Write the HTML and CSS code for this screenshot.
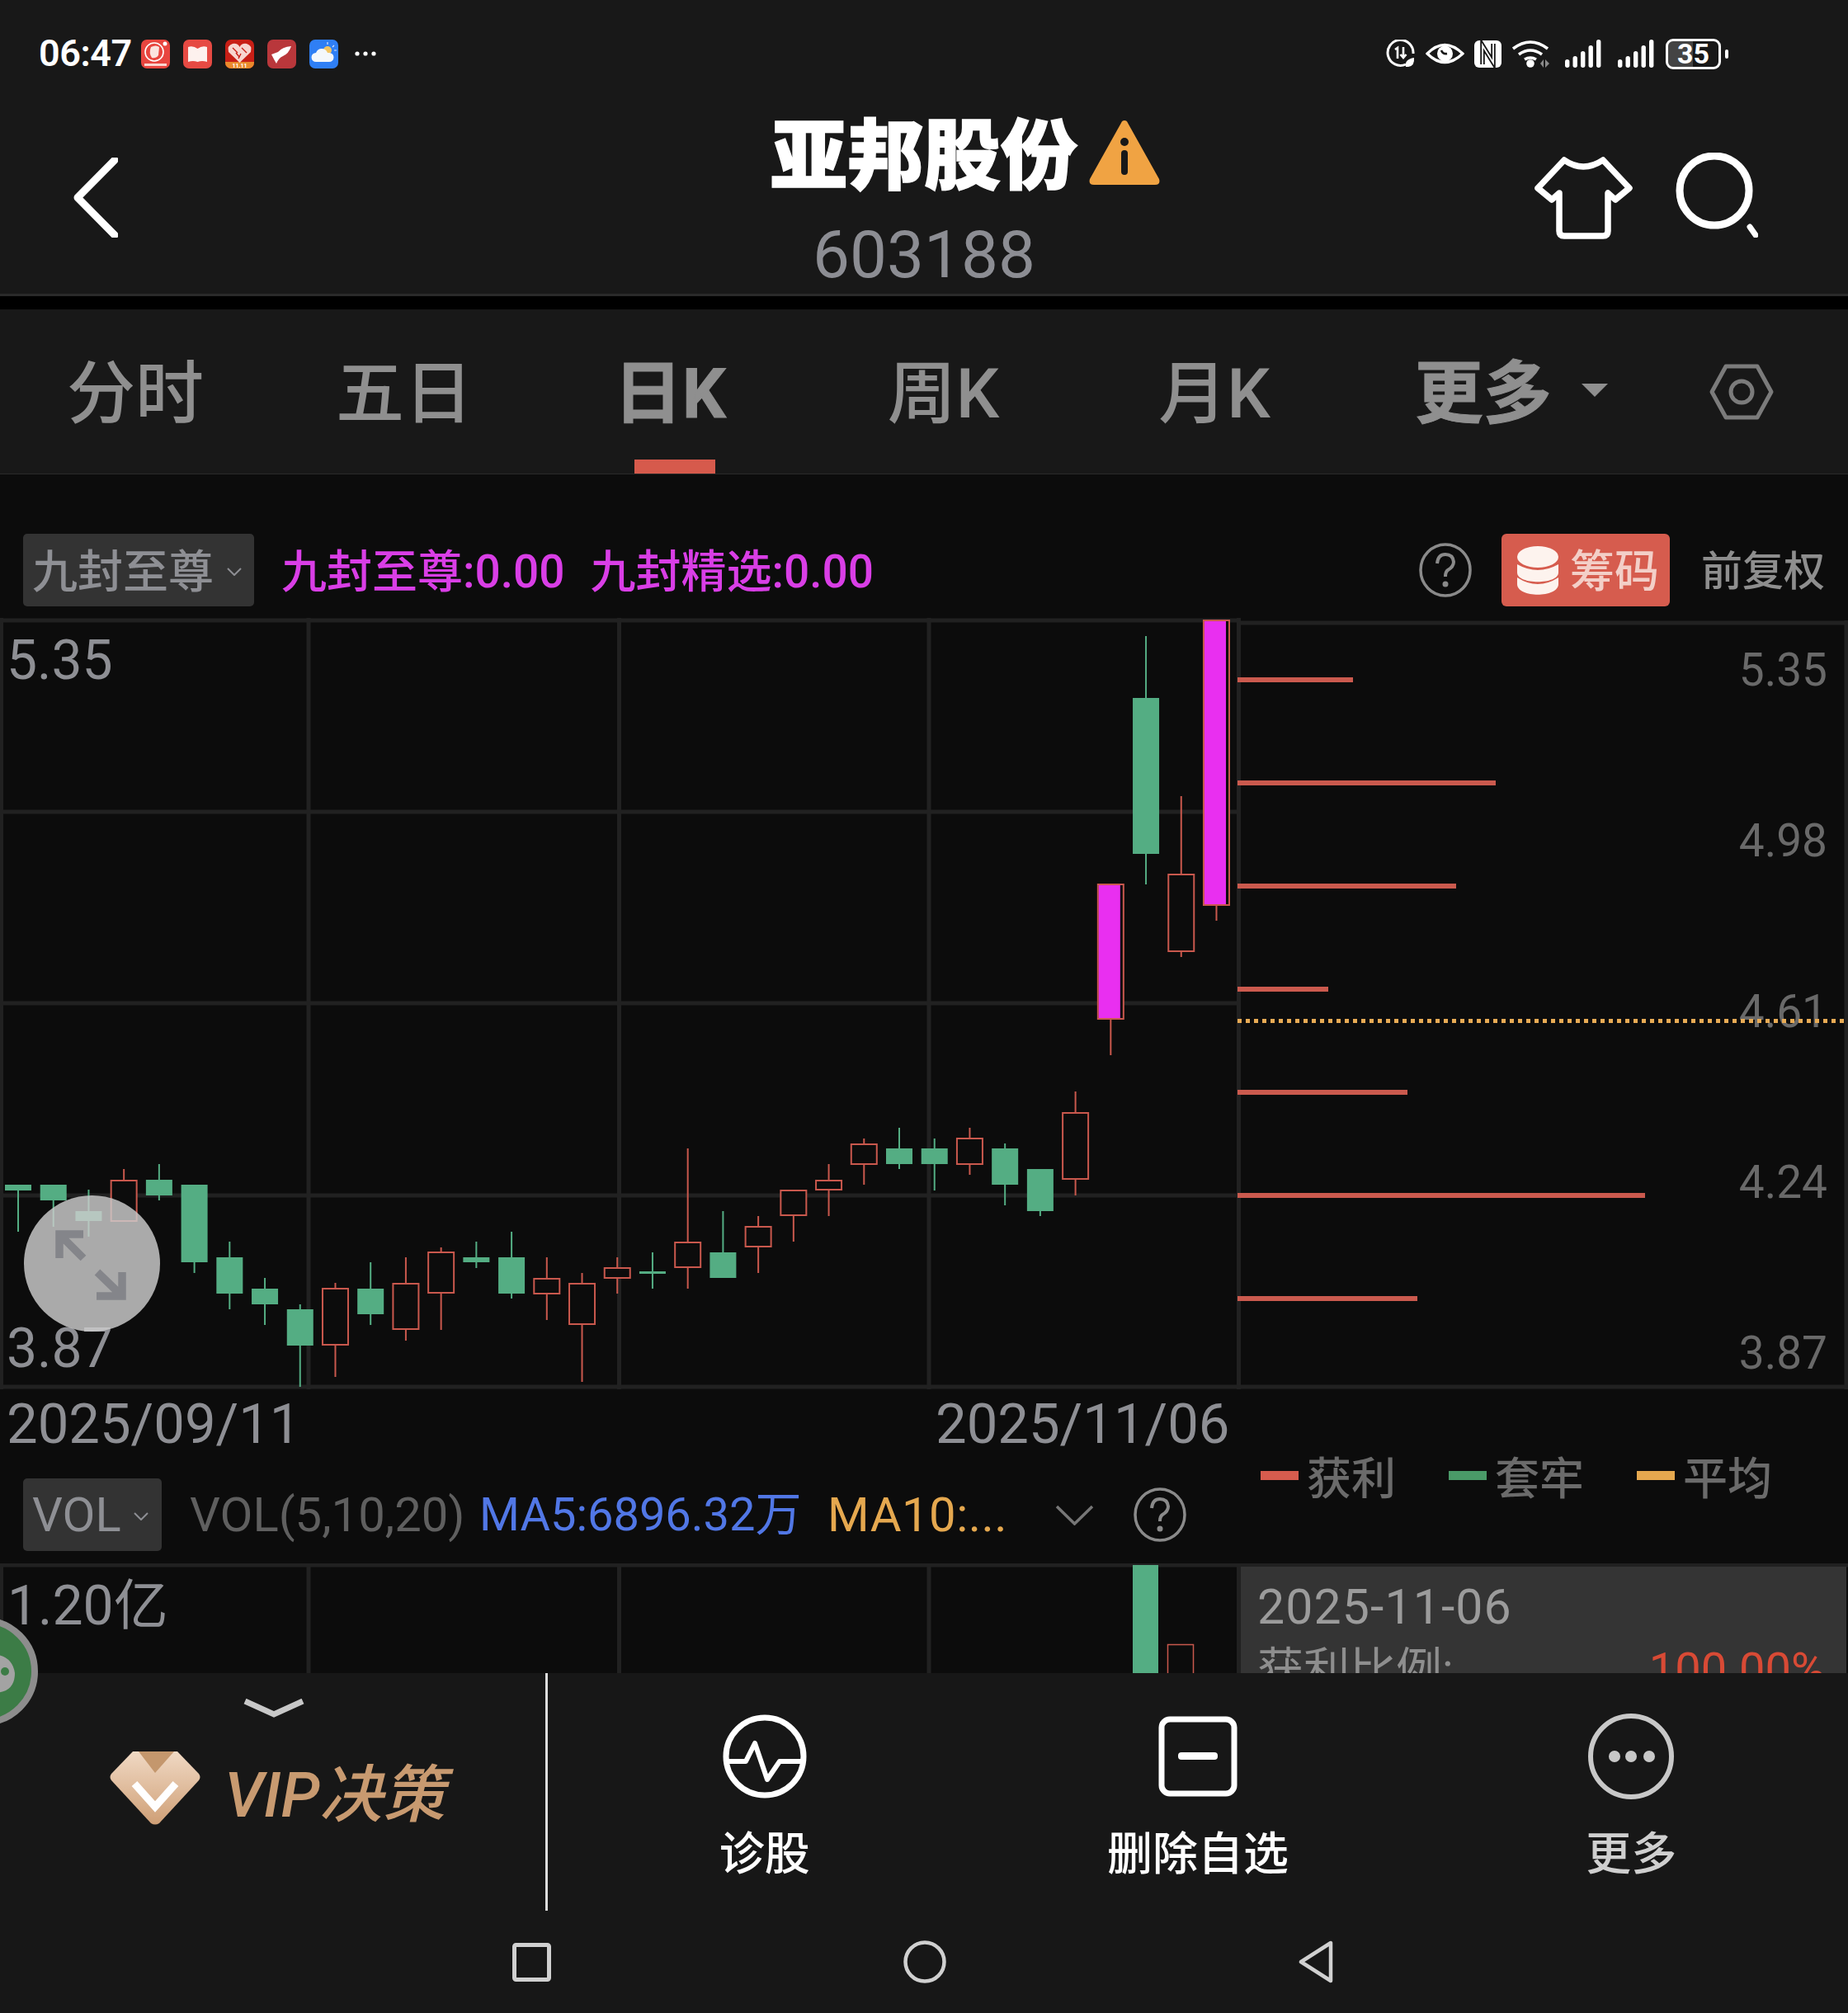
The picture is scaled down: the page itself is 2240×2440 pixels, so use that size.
FILE: index.html
```html
<!DOCTYPE html>
<html lang="zh-CN">
<head>
  <meta charset="UTF-8" />
  <title>亚邦股份</title>
  <link rel="stylesheet" href="styles.css">
</head>
<body>
<div class="page">

  <header class="top">
    <div class="status">
      <div class="status-left">
        <span class="clock">06:47</span>
        <svg class="app" viewBox="0 0 35 35"><rect width="35" height="35" rx="7" fill="#e8453f"/><circle cx="16" cy="15" r="11" fill="none" stroke="#fff" stroke-width="1.6"/><path d="M12 9q6-3 10 0l-1 10q-3 4-8 3q-4-6-1-13z" fill="#fbe3df"/><circle cx="29" cy="5" r="2.5" fill="#fff"/><rect x="4" y="29" width="27" height="3" fill="#fbd5d0"/></svg>
        <svg class="app" viewBox="0 0 35 35"><rect width="35" height="35" rx="7" fill="#e64a43"/><path d="M6 9q6-2 11.500 2q5.500-4 11.500-2v18q-6-2-11.500 0q-5.500-2-11.500 0z" fill="#fdf1ee"/></svg>
        <svg class="app" viewBox="0 0 35 35"><rect width="35" height="35" rx="7" fill="#c81f16"/><path d="M0 27h35v1a7 7 0 0 1-7 7H7a7 7 0 0 1-7-7z" fill="#ea8a2c"/><path d="M17.500 28L4 15q-2-8 5-10q6-1 8.500 4q2.500-5 8.500-4q7 2 5 10z" fill="#f7d6d0"/><path d="M9 10l6 6m5-6l6 6m-13 0l4 5m2-4l-3 6" stroke="#c81f16" stroke-width="1.400" fill="none"/><text x="17.500" y="33.500" class="app-tag" text-anchor="middle">11.11</text></svg>
        <svg class="app" viewBox="0 0 35 35"><rect width="35" height="35" rx="7" fill="#b9373b"/><path d="M29 8Q18 9 13 15L5 18Q8 24 11 29Q14 22 19 20Q26 17 29 8z" fill="#fff"/></svg>
        <svg class="app" viewBox="0 0 35 35"><rect width="35" height="35" rx="7" fill="#2f7ff5"/><circle cx="22" cy="13" r="5" fill="#f2c462"/><path d="M22 3v3m8 1l-2 2m5 4h-3" stroke="#dce8fb" stroke-width="1.200"/><path d="M8 27a5.500 5.500 0 0 1 0-11q2-5 7-5q5 0 7 5h2a5.500 5.500 0 0 1 0 11z" fill="#f4f7fb"/></svg>
        <svg class="more-dots" viewBox="0 0 28 8"><circle cx="4" cy="4" r="2.600"/><circle cx="14" cy="4" r="2.600"/><circle cx="24" cy="4" r="2.600"/></svg>
      </div>
      <div class="status-right">
        <svg class="si-saver" viewBox="0 0 35 34"><path d="M24 30A15.500 15.500 0 1 1 33 17" fill="none" stroke="#fff" stroke-width="3"/><path d="M11 12l3-2v13M21 9v13m-3.500-4l3.500 4l3.500-4" fill="none" stroke="#fff" stroke-width="2.600"/><path d="M24 33q-2-9 10-11q1 10-7 11z" fill="#fff"/></svg>
        <svg class="si-eye" viewBox="0 0 47 26"><path d="M2 13Q23-8 45 13Q23 34 2 13z" fill="none" stroke="#fff" stroke-width="3.200"/><circle cx="23.500" cy="13" r="9.500" fill="#fff"/><path d="M19 9q2 5 7 4" fill="none" stroke="#181818" stroke-width="2.600"/></svg>
        <svg class="si-nfc" viewBox="0 0 33 33"><rect width="33" height="33" rx="6" fill="#fff"/><path d="M10 29V6L23 27V4" fill="none" stroke="#181818" stroke-width="5.500"/><path d="M10 32V6L23 27V1" fill="none" stroke="#fff" stroke-width="1.800"/></svg>
        <svg class="si-wifi" viewBox="0 0 46 34"><path d="M2 11Q23-5 44 11M9 18q14-10 28 0M16 24q7-4 14 0" fill="none" stroke="#fff" stroke-width="3.600"/><circle cx="23" cy="29" r="4.800" fill="#fff"/><path d="M39 24v10l-4-5zM41 24l5 5-5 5z" fill="#8a8a8a"/></svg>
        <svg class="si-signal" viewBox="0 0 44 34"><rect y="24" width="5.400" height="10" rx="2.700"/><rect x="9.500" y="20" width="5.400" height="14" rx="2.700"/><rect x="19" y="14" width="5.400" height="20" rx="2.700"/><rect x="28.500" y="7" width="5.400" height="27" rx="2.700"/><rect x="38" width="5.400" height="34" rx="2.700"/></svg>
        <svg class="si-signal" viewBox="0 0 44 34"><rect y="24" width="5.400" height="10" rx="2.700"/><rect x="9.500" y="20" width="5.400" height="14" rx="2.700"/><rect x="19" y="14" width="5.400" height="20" rx="2.700"/><rect x="28.500" y="7" width="5.400" height="27" rx="2.700"/><rect x="38" width="5.400" height="34" rx="2.700"/></svg>
        <div class="battery"><span>35</span></div>
      </div>
    </div>
    <div class="title">
      <div class="title-side">
        <svg class="back" viewBox="0 0 54 97"><path d="M50 3L5 48.500L50 94" fill="none" stroke="#fff" stroke-width="9" stroke-linecap="round" stroke-linejoin="round"/></svg>
      </div>
      <div class="title-main">
        <h1>亚邦股份<svg class="warn" viewBox="0 0 86 79"><path d="M43 1Q46 1 47 4L85 72Q87 79 80 79H6Q-1 79 1 72L39 4Q40 1 43 1z" fill="#f0a343"/><circle cx="43" cy="27" r="5" fill="#181818"/><rect x="39" y="37" width="8" height="30" rx="4" fill="#181818"/></svg></h1>
        <div class="code">603188</div>
      </div>
      <div class="title-side title-tools">
        <svg class="shirt" viewBox="0 0 119 100"><path d="M36 4Q59 20 83 4L115 38L98 52L89 44V90Q89 96 83 96H36Q30 96 30 90V44L21 52L4 38z" fill="none" stroke="#fff" stroke-width="7.500" stroke-linejoin="round"/></svg>
        <svg class="search" viewBox="0 0 100 103"><circle cx="47" cy="46" r="42" fill="none" stroke="#fff" stroke-width="9"/><path d="M90 90L97 100" stroke="#fff" stroke-width="7" stroke-linecap="round"/></svg>
      </div>
    </div>
  </header>

  <nav class="tabs">
    <span class="tab t1">分时</span>
    <span class="tab t2">五日</span>
    <span class="tab t3 on">日K</span>
    <span class="tab t4">周K</span>
    <span class="tab t5">月K</span>
    <span class="tab t6 strong">更多</span>
    <svg class="caret" viewBox="0 0 32 16"><path d="M0 0H32L16 16z" fill="#8f8f8f"/></svg>
    <svg class="gear" viewBox="0 0 78 68"><path d="M20 3H58L75 34L58 65H20L3 34z" fill="none" stroke="#7b7b7b" stroke-width="5" stroke-linejoin="round"/><circle cx="39" cy="34" r="13" fill="none" stroke="#7b7b7b" stroke-width="5"/></svg>
  </nav>

  <section class="indicator">
    <div class="drop drop-wide">九封至尊<svg class="drop-arrow" viewBox="0 0 18 10"><path d="M1 1L9 9L17 1" fill="none" stroke="#8e8f94" stroke-width="2"/></svg></div>
    <span class="mag m1">九封至尊:0.00</span>
    <span class="mag m2">九封精选:0.00</span>
    <div class="indicator-right">
      <svg class="help" viewBox="0 0 64 66"><ellipse cx="32" cy="33" rx="30" ry="31" fill="none" stroke="#8a8a8a" stroke-width="3.500"/><path d="M22 25q1-11 10-11t10 9q0 6-7 10q-3 2-3 8" fill="none" stroke="#8a8a8a" stroke-width="4"/><circle cx="32" cy="50" r="3.500" fill="#8a8a8a"/></svg>
      <div class="chip-btn">
        <svg class="coins" viewBox="0 0 50 59"><ellipse cx="25" cy="13" rx="25" ry="13" fill="#fdf3ee"/><path d="M0 22Q25 36 50 22V32C50 47 0 47 0 32z" fill="#fdf3ee"/><path d="M0 38Q25 54 50 38V46C50 63 0 63 0 46z" fill="#fdf3ee"/></svg>
        <span>筹码</span>
      </div>
      <span class="adjust">前复权</span>
    </div>
  </section>

  <section class="chart">
    <svg id="kline" class="chart-svg" viewBox="0 749 2240 935">
      <path class="grid" d="M1.500 749V1684M374 749V1684M750.500 749V1684M1126 749V1684M1501.500 749V1684M2238 752V1684M0 752H1500M1500 755H2240M0 984H1500M0 1216H1500M0 1449H1500M0 1681H2240"/>
      <g class="chip-lines">
        <rect x="1500" y="821" width="140" height="6"/>
        <rect x="1500" y="946" width="313" height="6"/>
        <rect x="1500" y="1071" width="265" height="6"/>
        <rect x="1500" y="1196" width="110" height="6"/>
        <rect x="1500" y="1321" width="206" height="6"/>
        <rect x="1500" y="1446" width="494" height="6"/>
        <rect x="1500" y="1571" width="218" height="6"/>
      </g>
    </svg>
    <div class="range-labels">
      <span>5.35</span>
      <span>3.87</span>
    </div>
    <div class="price-axis">
      <span>5.35</span>
      <span>4.98</span>
      <span>4.61</span>
      <span>4.24</span>
      <span>3.87</span>
    </div>
    <div class="avg-line"></div>
    <svg class="expand" viewBox="0 0 165 165"><circle cx="82.500" cy="82.500" r="82.500" fill="#cdcdcd" fill-opacity="0.82"/><path d="M43 76V47H72M43 47L72 76M88 122H119V93M119 122L89 93" fill="none" stroke="#84858a" stroke-width="9.500"/></svg>
  </section>

  <section class="mid">
    <div class="mid-left">
      <div class="dates">
        <span class="date d1">2025/09/11</span>
        <span class="date">2025/11/06</span>
      </div>
      <div class="vol-row">
        <div class="drop drop-vol">VOL<svg class="drop-arrow" viewBox="0 0 18 10"><path d="M1 1L9 9L17 1" fill="none" stroke="#8e8f94" stroke-width="2"/></svg></div>
        <span class="vol-name">VOL(5,10,20)</span>
        <span class="vol-ma5">MA5:6896.32万</span>
        <span class="vol-ma10">MA10:...</span>
        <svg class="vol-chevron" viewBox="0 0 47 25"><path d="M2 2L23.500 23L45 2" fill="none" stroke="#777" stroke-width="3.500"/></svg>
        <svg class="help help-vol" viewBox="0 0 64 66"><ellipse cx="32" cy="33" rx="30" ry="31" fill="none" stroke="#8a8a8a" stroke-width="3.500"/><path d="M22 25q1-11 10-11t10 9q0 6-7 10q-3 2-3 8" fill="none" stroke="#8a8a8a" stroke-width="4"/><circle cx="32" cy="50" r="3.500" fill="#8a8a8a"/></svg>
      </div>
    </div>
    <div class="mid-right">
      <span class="key"><i class="swatch red"></i>获利</span>
      <span class="key"><i class="swatch green"></i>套牢</span>
      <span class="key"><i class="swatch orange"></i>平均</span>
    </div>
  </section>

  <section class="vol">
    <svg class="chart-svg" viewBox="0 1895 2240 133">
      <path class="grid" d="M1.500 1895V2028M374 1895V2028M750.500 1895V2028M1126 1895V2028M1501.500 1895V2028M0 1897H2240"/>
      <rect x="1373" y="1897" width="31" height="131" fill="#54ad83"/>
      <rect x="1415.500" y="1993.500" width="31" height="40" fill="none" stroke="#c9584d" stroke-width="1.500"/>
    </svg>
    <span class="vol-max">1.20亿</span>
    <div class="detail">
      <div class="detail-date">2025-11-06</div>
      <div class="detail-row"><span>获利比例:</span><span class="detail-pct">100.00%</span></div>
    </div>
  </section>

  <footer class="bar">
    <div class="actions">
      <div class="vip">
        <svg class="vip-fold" viewBox="0 0 76 24"><path d="M3 3L38 19L73 3" fill="none" stroke="#c8c8c8" stroke-width="7"/></svg>
        <div class="vip-row">
          <svg class="vip-logo" viewBox="0 0 110 90"><defs><linearGradient id="gem" x1="0" y1="0" x2="0" y2="1"><stop offset="0" stop-color="#f0d9c4"/><stop offset="1" stop-color="#cf9f76"/></linearGradient></defs><path d="M28 1H82L108 28Q111 32 108 36L60 88Q55 91 50 88L2 36Q-1 32 2 28z" fill="url(#gem)"/><path d="M35 1H78L55 27z" fill="#c4976d"/><path d="M30 40L55 68L80 40" fill="none" stroke="#fff" stroke-width="9"/></svg>
          <span class="vip-text">VIP决策</span>
        </div>
      </div>
      <div class="action">
        <svg class="action-icon" viewBox="0 0 106 106"><circle cx="53" cy="53" r="47" fill="none" stroke="#fff" stroke-width="7"/><path d="M6 59H30L41 37L56 81L71 59H100" fill="none" stroke="#fff" stroke-width="6" stroke-linejoin="round"/></svg>
        <span>诊股</span>
      </div>
      <div class="action">
        <svg class="action-icon" viewBox="0 0 106 106"><rect x="9" y="8" width="88" height="90" rx="10" fill="none" stroke="#fff" stroke-width="7"/><rect x="29" y="48" width="48" height="9" rx="4" fill="#fff"/></svg>
        <span>删除自选</span>
      </div>
      <div class="action action-dim">
        <svg class="action-icon" viewBox="0 0 106 106"><circle cx="53" cy="53" r="49" fill="none" stroke="#c8c8c8" stroke-width="6"/><circle cx="33" cy="53" r="7" fill="#c8c8c8"/><circle cx="53" cy="53" r="7" fill="#c8c8c8"/><circle cx="75" cy="53" r="7" fill="#c8c8c8"/></svg>
        <span>更多</span>
      </div>
    </div>
    <div class="nav">
      <svg class="nav-sq" viewBox="0 0 47 47"><rect x="2.500" y="2.500" width="42" height="42" rx="2" fill="none" stroke="#d0d0d0" stroke-width="5"/></svg>
      <svg class="nav-ci" viewBox="0 0 52 52"><circle cx="26" cy="26" r="23.500" fill="none" stroke="#d0d0d0" stroke-width="4.500"/></svg>
      <svg class="nav-tr" viewBox="0 0 42 52"><path d="M39 3V49L3 26z" fill="none" stroke="#d0d0d0" stroke-width="4.500" stroke-linejoin="round"/></svg>
    </div>
  </footer>

  <svg class="float-chat" viewBox="0 0 132 132"><circle cx="66" cy="66" r="62" fill="#3c7c46" stroke="#8d8d8d" stroke-width="8"/><path d="M60 46Q100 40 104 68Q104 92 78 92L66 104L62 90Q40 86 40 66Q42 50 60 46z" fill="#a3a3a3"/><circle cx="92" cy="66" r="5" fill="#3c7c46"/></svg>
</div>
<script src="chart.js"></script>
</body>
</html>
```

FILE: styles.css
```css
* { box-sizing: border-box; }
html, body { margin: 0; padding: 0; background: #0c0c0c; }
body { font-family: Roboto, "Noto Sans CJK SC", sans-serif; color: #8e8f94; }
svg { display: block; flex: none; }

.page { position: relative; width: 2240px; height: 2440px; overflow: hidden; }

/* header */
.top { height: 375px; background: #181818; border-bottom: 16px solid #000; }
.top::after { content: ""; display: block; height: 3px; background: #2a2a2a; margin-top: 0; }
.status { height: 130px; padding: 47px 154px 0 47px; display: flex; justify-content: space-between; }
.status-left, .status-right { display: flex; align-items: center; height: 36px; }
.clock { width: 124px; font-size: 45px; font-weight: 600; color: #fff; line-height: 36px; letter-spacing: -0.5px; }
.app { width: 35px; height: 35px; margin-right: 16px; }
.app-tag { font: 700 7px Roboto, sans-serif; fill: #fff; }
.more-dots { width: 28px; height: 8px; margin-left: 3px; fill: #fff; }
.status-right svg { fill: #fff; }
.si-saver { width: 35px; height: 34px; margin-right: 13px; }
.si-eye { width: 47px; height: 26px; margin-right: 12px; }
.si-nfc { width: 33px; height: 33px; margin-right: 12px; }
.si-wifi { width: 46px; height: 34px; margin-right: 19px; }
.si-signal { width: 44px; height: 34px; margin-right: 20px; }
.si-signal + .battery { margin-left: -6px; }
.battery { position: relative; width: 67px; height: 37px; border: 3px solid #fff; border-radius: 9px; color: #fff; background: linear-gradient(90deg, #444 0 30px, transparent 30px); background-clip: padding-box; font-size: 34px; font-weight: 700; line-height: 31px; text-align: center; }
.battery::after { content: ""; position: absolute; right: -12px; top: 10px; width: 4px; height: 11px; border-radius: 2px; background: #fff; }

.title { height: 226px; display: flex; justify-content: space-between; }
.title-side { width: 400px; }
.back { width: 54px; height: 97px; margin: 61px 0 0 89px; }
.title-tools { display: flex; justify-content: flex-end; padding-right: 109px; }
.shirt { width: 119px; height: 100px; margin: 60px 52px 0 0; }
.search { width: 100px; height: 103px; margin-top: 55px; }
.title-main { text-align: center; }
h1 { position: relative; margin: 0; font-size: 93px; line-height: 122px; font-weight: 900; color: #fff; -webkit-text-stroke: 1.5px #fff; }
.warn { position: absolute; left: 386px; top: 15px; width: 86px; height: 79px; }
.code { font-size: 80px; line-height: 90px; margin-top: 12px; color: #8c8d93; }

/* tabs */
.tabs { height: 200px; display: flex; align-items: flex-start; background: #181818; border-bottom: 1px solid #2a2a2a; }
.tab { position: relative; height: 199px; padding-top: 49px; font-size: 83px; font-weight: 500; line-height: 108px; color: #8f8f8f; white-space: nowrap; }
.t1 { margin-left: 81px; }
.t2 { margin-left: 160px; }
.t3 { margin-left: 171px; }
.t4 { margin-left: 196px; }
.t5 { margin-left: 193px; }
.t6 { margin-left: 175px; }
.tab.on, .tab.strong { font-weight: 700; -webkit-text-stroke: 1px #8f8f8f; }
.tab.on::after { content: ""; position: absolute; left: 25px; bottom: 0; width: 98px; height: 17px; background: #d65a4c; }
.caret { width: 32px; height: 16px; margin: 90px 0 0 36px; }
.gear { width: 78px; height: 68px; margin: 66px 0 0 123px; }

/* indicator row */
.indicator { height: 174px; padding: 72px 28px 0; display: flex; align-items: flex-start; }
.drop { position: relative; height: 88px; background: #333; border-radius: 5px; color: #8e8f94; font-size: 55px; font-weight: 500; line-height: 93px; white-space: nowrap; }
.drop-wide { width: 280px; padding-left: 11px; }
.drop-arrow { position: absolute; right: 15px; top: 41px; width: 18px; height: 10px; }
.mag { font-size: 55px; font-weight: 500; line-height: 93px; color: #d93ee6; white-space: nowrap; }
.m1 { margin-left: 33px; }
.m2 { margin-left: 31px; }
.indicator-right { margin-left: auto; display: flex; align-items: flex-start; }
.help { width: 64px; height: 66px; margin-top: 11px; }
.chip-btn { width: 204px; height: 88px; margin-left: 36px; padding-left: 19px; display: flex; align-items: center; background: #d65c4e; border-radius: 6px; }
.coins { width: 50px; height: 59px; }
.chip-btn span { margin-left: 14px; padding-top: 5px; font-size: 54px; font-weight: 500; color: #f3cfc8; line-height: 88px; }
.adjust { margin-left: 38px; font-size: 50px; font-weight: 500; line-height: 93px; color: #8e8e8e; white-space: nowrap; }

/* kline */
.chart { position: relative; height: 935px; background: #0c0c0c; }
.chart-svg { position: absolute; left: 0; top: 0; width: 2240px; height: 100%; }
.grid { fill: none; stroke: #212121; stroke-width: 5; }
.chip-lines { fill: #cb5a4e; }
.range-labels { position: absolute; left: 8px; top: 19px; height: 900px; display: flex; flex-direction: column; justify-content: space-between; font-size: 66px; line-height: 66px; color: #8e8f94; }
.price-axis { position: absolute; right: 25px; top: 35px; height: 884px; display: flex; flex-direction: column; justify-content: space-between; font-size: 55px; line-height: 56px; color: #696969; }
.avg-line { position: absolute; left: 1500px; right: 0; top: 486px; height: 5px; background: repeating-linear-gradient(90deg, #e8ab55 0 5px, transparent 5px 10px); }
.expand { position: absolute; left: 29px; top: 700px; width: 165px; height: 165px; }

/* dates + volume header */
.mid { height: 211px; display: flex; }
.mid-left { width: 1500px; }
.dates { display: flex; padding: 0 0 0 8px; font-size: 67px; line-height: 84px; height: 84px; color: #8e8f94; }
.d1 { width: 1126px; }
.vol-row { position: relative; display: flex; align-items: center; height: 88px; margin: 24px 0 0 28px; white-space: nowrap; font-size: 56px; line-height: 90px; }
.drop-vol { width: 168px; padding-left: 11px; font-size: 58px; font-weight: 400; line-height: 88px; }
.drop-vol .drop-arrow { right: 16px; }
.vol-name { flex: none; width: 333px; margin-left: 34px; font-size: 58px; color: #5f5f5f; }
.vol-ma5 { flex: none; width: 386px; margin-left: 18px; color: #5177e6; }
.vol-ma10 { flex: none; width: 276px; margin-left: 36px; font-size: 58px; letter-spacing: 0.5px; color: #e5a84f; }
.vol-chevron { width: 47px; height: 25px; }
.help-vol { margin: 0 0 0 48px; }
.mid-right { flex: 1; display: flex; padding: 68px 0 0 28px; }
.key { display: flex; align-items: center; height: 72px; font-size: 54px; font-weight: 500; color: #6b6b6b; margin-right: 64px; white-space: nowrap; }
.swatch { display: block; width: 46px; height: 11px; margin-right: 10px; }
.swatch.red { background: #d65c4e; }
.swatch.green { background: #4a9a68; }
.swatch.orange { background: #e5a84f; }

/* volume pane */
.vol { position: relative; height: 133px; overflow: hidden; }
.vol-max { position: absolute; left: 9px; top: 12px; font-size: 66px; line-height: 80px; color: #8e8f94; }
.detail { position: absolute; left: 1504px; right: 2px; top: 4px; bottom: 0; padding: 16px 26px 0 20px; background: #343434; }
.detail-date { font-size: 59px; letter-spacing: 1.100px; line-height: 66px; color: #9b9b9b; }
.detail-row { display: flex; justify-content: space-between; font-size: 56px; line-height: 66px; margin-top: 10px; color: #8e8e8e; }
.detail-pct { color: #d84a35; }

/* bottom bar */
.bar { position: relative; height: 412px; background: #171717; }
.actions { height: 288px; display: flex; }
.vip { width: 664px; border-right: 3px solid #ddd; padding-top: 31px; }
.vip-fold { width: 76px; height: 24px; margin-left: 294px; }
.vip-row { display: flex; align-items: flex-start; margin: 39px 0 0 133px; }
.vip-logo { width: 110px; height: 90px; }
.vip-text { margin: 9px 0 0 29px; font-size: 76px; font-weight: 500; line-height: 90px; font-style: italic; color: #c89a70; white-space: nowrap; }
.action { width: 525.300px; padding-top: 48px; display: flex; flex-direction: column; align-items: center; font-size: 55px; font-weight: 500; line-height: 70px; color: #fff; }
.action span { margin-top: 30px; }
.action-icon { width: 106px; height: 106px; }
.action-dim { color: #cfcfcf; }
.nav { height: 124px; display: flex; align-items: center; justify-content: center; gap: 427px; padding-right: 4px; }
.nav-sq { width: 47px; height: 47px; }
.nav-ci { width: 52px; height: 52px; }
.nav-tr { width: 42px; height: 52px; }

.float-chat { position: absolute; left: -86px; top: 1960px; width: 132px; height: 132px; }
```

FILE: chart.js
```js
// candles left to right: [kind, body top, body bottom, wick high, wick low]
// kind: g = falling (solid green), r = rising (hollow red), m = highlighted (magenta)
const candles = [
  ['g', 1436, 1443, 1436, 1493],
  ['g', 1436, 1455, 1436, 1487],
  ['g', 1468, 1480, 1442, 1499],
  ['r', 1430, 1481, 1417, 1481],
  ['g', 1430, 1449, 1411, 1455],
  ['g', 1436, 1530, 1436, 1543],
  ['g', 1524, 1568, 1505, 1587],
  ['g', 1562, 1581, 1549, 1606],
  ['g', 1587, 1631, 1581, 1681],
  ['r', 1561, 1631, 1555, 1669],
  ['g', 1562, 1593, 1530, 1606],
  ['r', 1555, 1612, 1524, 1625],
  ['r', 1517, 1568, 1512, 1612],
  ['g', 1524, 1530, 1505, 1537],
  ['g', 1524, 1568, 1493, 1574],
  ['r', 1549, 1569, 1524, 1600],
  ['r', 1555, 1606, 1543, 1675],
  ['r', 1536, 1550, 1524, 1568],
  ['g', 1541, 1544, 1518, 1562],
  ['r', 1505, 1537, 1392, 1562],
  ['g', 1518, 1549, 1468, 1549],
  ['r', 1486, 1512, 1474, 1543],
  ['r', 1442, 1474, 1442, 1505],
  ['r', 1430, 1443, 1411, 1474],
  ['r', 1386, 1412, 1380, 1436],
  ['g', 1392, 1411, 1367, 1417],
  ['g', 1392, 1411, 1380, 1443],
  ['r', 1379, 1412, 1367, 1424],
  ['g', 1392, 1436, 1386, 1461],
  ['g', 1417, 1468, 1417, 1474],
  ['r', 1348, 1430, 1323, 1449],
  ['m', 1071, 1236, 1071, 1279],
  ['g', 846, 1035, 771, 1072],
  ['r', 1059, 1154, 965, 1160],
  ['m', 751, 1098, 751, 1116]
];

const RED = '#c9584d';
const GREEN = '#54ad83';
const svg = document.getElementById('kline');

function add(tag, attrs) {
  const el = document.createElementNS('http://www.w3.org/2000/svg', tag);
  Object.keys(attrs).forEach(k => el.setAttribute(k, attrs[k]));
  svg.appendChild(el);
}

candles.forEach((c, i) => {
  const [kind, top, bottom, high, low] = c;
  const x = 22 + 42.72 * i;
  const color = kind === 'g' ? GREEN : RED;
  add('rect', { x: x - 1, y: high, width: 2, height: low - high, fill: color });
  if (kind === 'g') {
    add('rect', { x: x - 16, y: top, width: 32, height: bottom - top, fill: GREEN });
  } else {
    add('rect', { x: x - 15.5, y: top + 1, width: 31, height: bottom - top - 2, fill: '#0c0c0c', stroke: RED, 'stroke-width': 2 });
  }
  if (kind === 'm') {
    add('rect', { x: x - 14.5, y: top + 2, width: 26, height: bottom - top - 4, fill: '#e92ff0' });
  }
});
```
